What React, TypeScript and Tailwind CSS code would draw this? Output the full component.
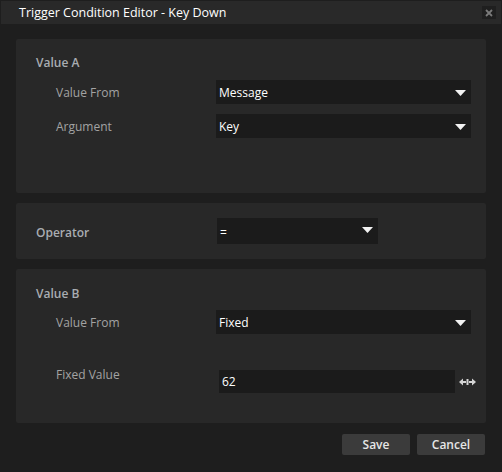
import React from "react";

function Caret() {
  return (
    <svg width="11" height="6" viewBox="0 0 11 6" className="shrink-0">
      <polygon points="0,0 11,0 5.5,6" fill="#f2f2f2" />
    </svg>
  );
}

function Dropdown({ value, className }: { value: string; className: string }) {
  return (
    <div className={`flex items-center justify-between bg-[#1b1b1b] pl-[3px] pr-[5px] text-white ${className}`}>
      <span>{value}</span>
      <Caret />
    </div>
  );
}

function Row({ label, children }: { label: string; children: React.ReactNode }) {
  return (
    <div className="flex items-center">
      <div className="w-[200px] shrink-0 pl-10 pt-[2px] text-[#a3a3a3]">{label}</div>
      {children}
    </div>
  );
}

function SlideIcon() {
  return (
    <svg width="17" height="8" viewBox="0 0 17 8">
      <polygon points="0,4 4,0.5 4,7.5" fill="#d4d4d4" />
      <rect x="3" y="3" width="4" height="2" fill="#d4d4d4" />
      <rect x="7.5" y="1" width="2" height="6" fill="#d4d4d4" />
      <rect x="10" y="3" width="4" height="2" fill="#d4d4d4" />
      <polygon points="17,4 13,0.5 13,7.5" fill="#d4d4d4" />
    </svg>
  );
}

export default function App() {
  return (
    <div
      className="w-[502px] h-[472px] bg-[#1e1e1e] text-[12px] leading-4 flex flex-col"
      style={{ fontFamily: '"Open Sans", "Noto Sans", sans-serif' }}
    >
      {/* Title bar */}
      <div className="mx-px mt-px h-[23px] bg-[#292929] flex items-center justify-between pl-[18px] pr-[5px]">
        <span className="text-white text-[12.5px]">Trigger Condition Editor - Key Down</span>
        <div className="w-[14px] h-[13px] bg-[#1f1f1f] flex items-center justify-center">
          <svg width="8" height="8" viewBox="0 0 8 8">
            <path d="M1 1 L7 7 M7 1 L1 7" stroke="#7a7a7a" strokeWidth="1.8" />
          </svg>
        </div>
      </div>

      <div className="px-4 pt-[15px] flex flex-col gap-[10px]">
        {/* Value A */}
        <div className="h-[154px] bg-[#282828] rounded-[2px] pt-[16px] pr-[15px]">
          <div className="pl-5 font-semibold text-[#a9adb2]">Value A</div>
          <div className="mt-[9px] flex flex-col gap-[10px]">
            <Row label="Value From">
              <Dropdown value="Message" className="flex-1 h-6 pt-px" />
            </Row>
            <Row label="Argument">
              <Dropdown value="Key" className="flex-1 h-6 pt-px" />
            </Row>
          </div>
        </div>

        {/* Operator */}
        <div className="h-[56px] bg-[#282828] rounded-[2px] flex items-center">
          <div className="w-[201px] pl-5 pt-[3px] font-semibold text-[#a9adb2]">Operator</div>
          <div className="w-[161px] h-[26px] bg-[#1b1b1b] flex justify-between pl-[3px] pr-[5px] pt-[7px] text-white">
            <span>=</span>
            <div className="pt-[2px]"><Caret /></div>
          </div>
        </div>

        {/* Value B */}
        <div className="h-[154px] bg-[#282828] rounded-[2px] pt-[17px] pr-[15px]">
          <div className="pl-5 font-semibold text-[#a9adb2]">Value B</div>
          <div className="mt-[8px]">
            <Row label="Value From">
              <Dropdown value="Fixed" className="flex-1 h-6 pt-px" />
            </Row>
          </div>
          <div className="mt-[36px] flex items-start">
            <div className="w-[203px] shrink-0 pl-10 text-[#a3a3a3] -mt-[3px]">Fixed Value</div>
            <div className="w-[236px] shrink-0 h-[23px] bg-[#1b1b1b] text-white pl-[3px] pt-px flex items-center">62</div>
            <div className="ml-[4px] shrink-0 h-[23px] flex items-center pt-[1px]">
              <SlideIcon />
            </div>
          </div>
        </div>
      </div>

      {/* Buttons */}
      <div className="mt-[11px] pr-[17px] flex justify-end gap-[7px]">
        <button className="w-[68px] h-[21px] bg-[#3b3b3b] rounded-[2px] text-[#e6e6e6] font-semibold">Save</button>
        <button className="w-[68px] h-[21px] bg-[#3b3b3b] rounded-[2px] text-[#e6e6e6] font-semibold">Cancel</button>
      </div>
    </div>
  );
}
